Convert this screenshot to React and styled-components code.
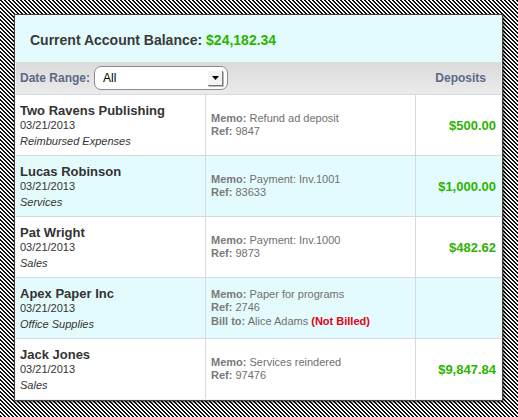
import React from 'react';
import styled, { createGlobalStyle } from 'styled-components';

const hatch =
  "url(\"data:image/svg+xml,%3Csvg xmlns='http://www.w3.org/2000/svg' width='4' height='4' shape-rendering='crispEdges'%3E%3Cpath fill='%23111' d='M0 0h2v1H0zM1 1h2v1H1zM2 2h2v1H2zM3 3h1v1H3zM0 3h1v1H0z'/%3E%3C/svg%3E\")";

const GlobalStyle = createGlobalStyle`
  html, body {
    margin: 0;
    padding: 0;
  }
  body {
    font-family: "Liberation Sans", Arial, Helvetica, sans-serif;
    background: #fff ${hatch} repeat;
    min-height: 417px;
  }
`;

const deposits = [
  {
    name: 'Two Ravens Publishing',
    date: '03/21/2013',
    category: 'Reimbursed Expenses',
    memo: 'Refund ad deposit',
    ref: '9847',
    amount: '$500.00',
  },
  {
    name: 'Lucas Robinson',
    date: '03/21/2013',
    category: 'Services',
    memo: 'Payment: Inv.1001',
    ref: '83633',
    amount: '$1,000.00',
  },
  {
    name: 'Pat Wright',
    date: '03/21/2013',
    category: 'Sales',
    memo: 'Payment: Inv.1000',
    ref: '9873',
    amount: '$482.62',
  },
  {
    name: 'Apex Paper Inc',
    date: '03/21/2013',
    category: 'Office Supplies',
    memo: 'Paper for programs',
    ref: '2746',
    billTo: 'Alice Adams',
    amount: '',
  },
  {
    name: 'Jack Jones',
    date: '03/21/2013',
    category: 'Sales',
    memo: 'Services reindered',
    ref: '97476',
    amount: '$9,847.84',
  },
];

const App = () => {
  return (
    <Page>
      <GlobalStyle />
      <Panel>
        <Header>
          Current Account Balance: <Money>$24,182.34</Money>
        </Header>
        <FilterBar>
          <FilterLabel>Date Range:</FilterLabel>
          <Select>
            <span>All</span>
            <ArrowButton>
              <svg width="7" height="4" viewBox="0 0 7 4">
                <path d="M0 0 L7 0 L3.5 4 Z" fill="#000" />
              </svg>
            </ArrowButton>
          </Select>
          <ColumnTitle>Deposits</ColumnTitle>
        </FilterBar>
        <Rows>
          {deposits.map((d, i) => (
            <Row key={d.name} $alt={i % 2 === 1}>
              <PayerCell>
                <Name>{d.name}</Name>
                <Date>{d.date}</Date>
                <Category>{d.category}</Category>
              </PayerCell>
              <MemoCell>
                <Line><b>Memo:</b> {d.memo}</Line>
                <Line><b>Ref:</b> {d.ref}</Line>
                {d.billTo && (
                  <Line>
                    <b>Bill to:</b> {d.billTo} <NotBilled>(Not Billed)</NotBilled>
                  </Line>
                )}
              </MemoCell>
              <AmountCell>{d.amount}</AmountCell>
            </Row>
          ))}
        </Rows>
      </Panel>
    </Page>
  );
};

const Page = styled.div`
  padding: 15px 16px 0 15px;
`
const Panel = styled.div`
  width: 485px;
  border: 1px solid #f2f2f2;
  background: #fff;
  box-shadow: 0 0 0 1px #444, 1px 1px 3px 1px rgba(0, 0, 0, 0.75);
`
const Header = styled.div`
  height: 46px;
  display: flex;
  align-items: center;
  padding-left: 14px;
  padding-top: 1px;
  box-sizing: border-box;
  background: #e4fbfd;
  font-size: 14px;
  font-weight: bold;
  color: #3a3a3a;
  white-space: pre;
`
const Money = styled.span`
  color: #2cb400;
`
const FilterBar = styled.div`
  height: 32px;
  display: flex;
  align-items: center;
  padding: 0 15px 0 4px;
  background: linear-gradient(#dadada, #ebebeb);
`
const FilterLabel = styled.div`
  font-size: 12px;
  font-weight: bold;
  color: #5b6a87;
  margin-right: 4px;
`
const Select = styled.div`
  width: 120px;
  height: 22px;
  border: 1px solid #8a8a8a;
  border-radius: 7px;
  background: #fff;
  display: flex;
  align-items: center;
  justify-content: space-between;
  padding: 0 4px 0 8px;
  font-size: 12px;
  color: #000;
`
const ArrowButton = styled.div`
  width: 14px;
  height: 14px;
  display: flex;
  align-items: center;
  justify-content: center;
  background: #f4f4f4;
  border-right: 1px solid #777;
  border-bottom: 1px solid #777;
  box-shadow: 1px 1px 0 #bbb;
`
const ColumnTitle = styled.div`
  margin-left: auto;
  font-size: 12px;
  font-weight: bold;
  color: #5b6a87;
`
const Rows = styled.div`
  display: flex;
  flex-direction: column;
`
const Row = styled.div`
  display: grid;
  grid-template-columns: 190px 210px 1fr;
  background: ${p => (p.$alt ? '#e4fbfd' : '#fff')};
  border-top: 1px solid #d4d9e3;
`
const PayerCell = styled.div`
  padding: 8px 4px 6px 4px;
  border-right: 1px solid #d4d9e3;
  color: #333;
`
const Name = styled.div`
  font-size: 13px;
  font-weight: bold;
  line-height: 15px;
`
const Date = styled.div`
  font-size: 11px;
  line-height: 15px;
`
const Category = styled.div`
  font-size: 11px;
  line-height: 16px;
  font-style: italic;
`
const MemoCell = styled.div`
  padding: 0 5px;
  display: flex;
  flex-direction: column;
  justify-content: center;
  border-right: 1px solid #d4d9e3;
  font-size: 11px;
  color: #707070;
  b {
    color: #7a7a7a;
  }
`
const Line = styled.div`
  line-height: 13.5px;
`
const NotBilled = styled.span`
  color: #e20014;
  font-weight: bold;
`
const AmountCell = styled.div`
  display: flex;
  align-items: center;
  justify-content: flex-end;
  padding-right: 5px;
  font-size: 13px;
  font-weight: bold;
  color: #2cb400;
`

export default App;
